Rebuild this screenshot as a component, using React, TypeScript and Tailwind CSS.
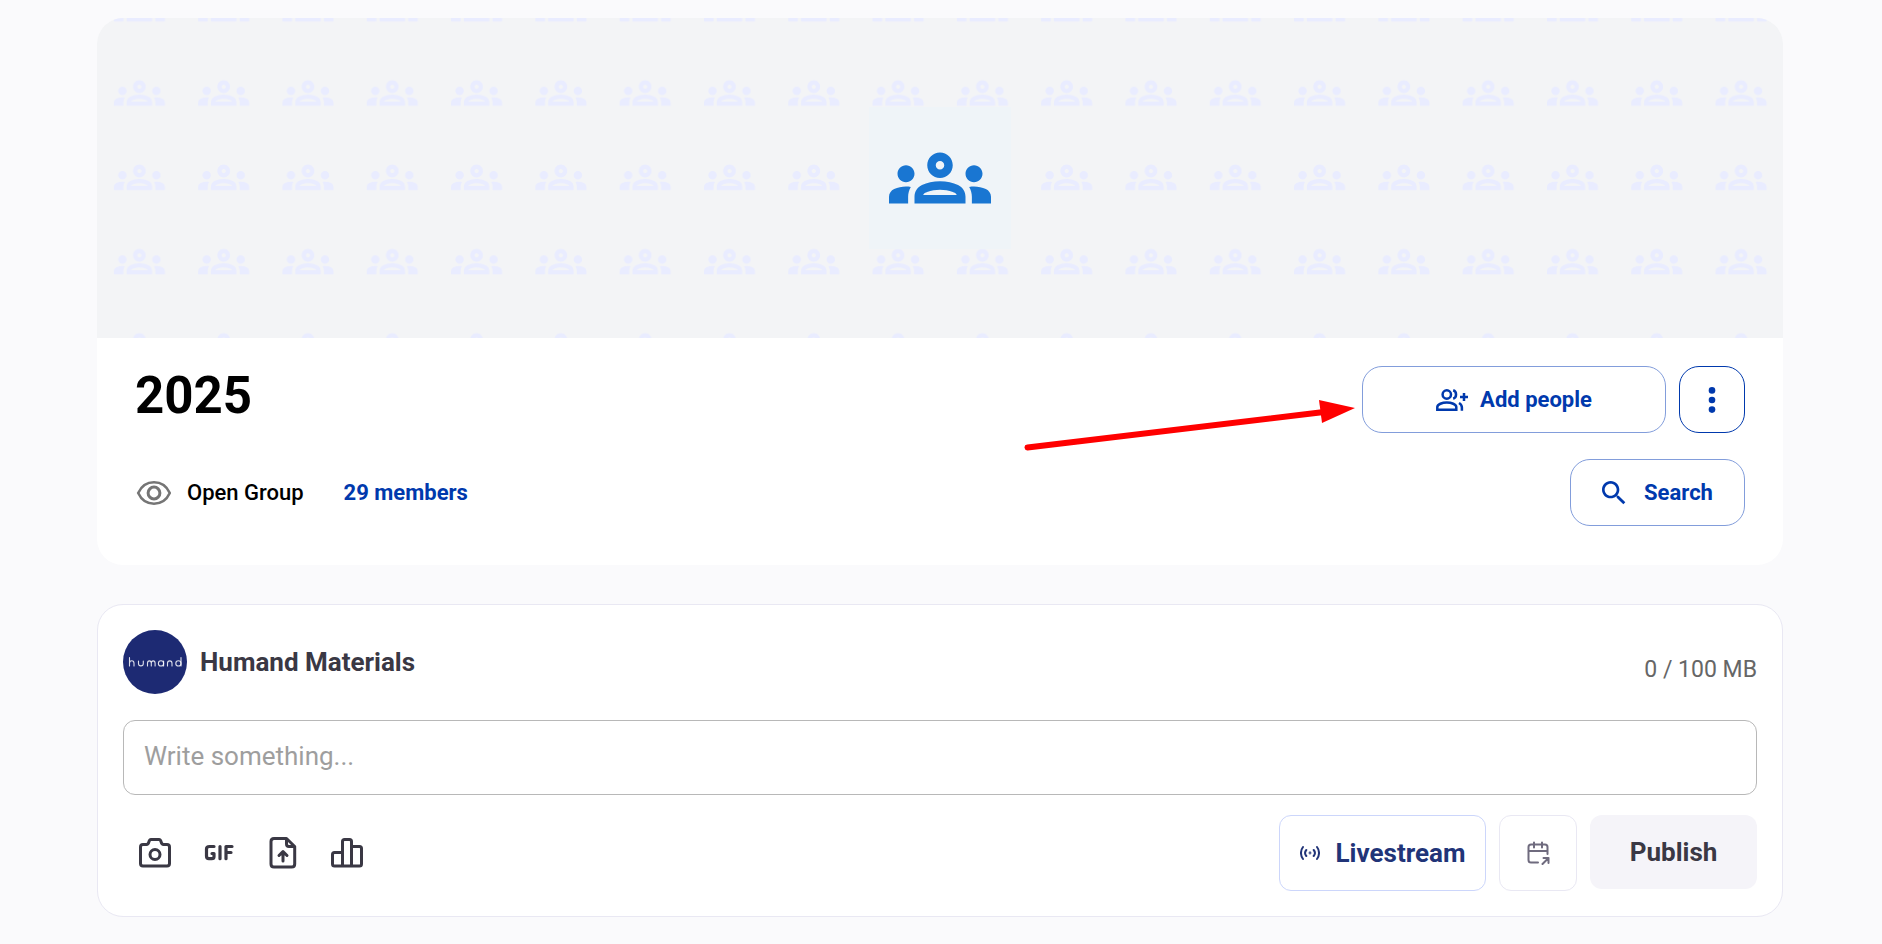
import { useState } from "react";

const GROUPS_PATH =
  "M4 13c1.1 0 2-.9 2-2s-.9-2-2-2-2 .9-2 2 .9 2 2 2zm1.13 1.1c-.37-.06-.74-.1-1.13-.1-.99 0-1.93.21-2.78.58C.48 14.9 0 15.62 0 16.43V18h4.5v-1.61c0-.83.23-1.61.63-2.29zM20 13c1.1 0 2-.9 2-2s-.9-2-2-2-2 .9-2 2 .9 2 2 2zm4 3.43c0-.81-.48-1.53-1.22-1.85-.85-.37-1.79-.58-2.78-.58-.39 0-.76.04-1.13.1.4.68.63 1.46.63 2.29V18H24v-1.57zm-7.76-2.78c-1.17-.52-2.61-.9-4.24-.9s-3.07.39-4.24.9C6.68 14.13 6 15.21 6 16.39V18h12v-1.61c0-1.18-.68-2.26-1.76-2.74zM8.07 16c.09-.23.13-.39.91-.69.97-.38 1.99-.56 3.02-.56s2.05.18 3.02.56c.77.3.81.46.91.69H8.07zM12 8c.55 0 1 .45 1 1s-.45 1-1 1-1-.45-1-1 .45-1 1-1m0-2c-1.66 0-3 1.34-3 3s1.34 3 3 3 3-1.34 3-3-1.34-3-3-3z";

function Cover() {
  return (
    <div className="relative flex h-80 items-center justify-center overflow-hidden rounded-t-[26px] bg-[#f3f4f6]">
      <svg className="absolute inset-0 h-full w-full" aria-hidden="true">
        <defs>
          <pattern id="groups" y="33" width="84.3" height="84.3" patternUnits="userSpaceOnUse">
            <path d={GROUPS_PATH} transform="translate(16.9 16.6) scale(2.125)" fill="#e9ecff" />
          </pattern>
        </defs>
        <rect width="100%" height="100%" fill="url(#groups)" />
      </svg>
      <div className="relative bg-[#eff4f8] p-5">
        <svg className="size-[102px]" viewBox="0 0 24 24" fill="#1976d2" aria-hidden="true">
          <path d={GROUPS_PATH} />
        </svg>
      </div>
    </div>
  );
}

function AddPeopleIcon() {
  return (
    <svg className="h-[22px] w-8" viewBox="0 0 32 22" fill="none" stroke="currentColor" strokeWidth="2.5" aria-hidden="true">
      <circle cx="10.8" cy="5.5" r="4.2" />
      <path d="M1.3 20.7v-2.6c0-2.8 5-4.6 9.500-4.600s9.500 1.800 9.500 4.600v2.600z" />
      <path d="M17.200 1.300c3.800 1.200 3.800 7.200 0 8.400M23 14c2.200 1.200 2.900 2.800 2.900 4.600v3.200M28 4v8M24 8h8" />
    </svg>
  );
}

function HeaderCard() {
  return (
    <section className="rounded-[26px] bg-white">
      <Cover />
      <div className="flex flex-col gap-[26px] px-[38px] pt-7 pb-[39px]">
        <div className="flex items-start justify-between">
          <h1 className="text-[51px] leading-[60px] font-bold text-black">2025</h1>
          <div className="flex gap-[13px]">
            <div className="relative">
              <button className="flex h-[67px] w-[304px] items-center justify-center gap-3 rounded-[20px] border border-[#829ddb] text-[22px] font-bold text-[#0039ad]">
                <AddPeopleIcon />
                Add people
              </button>
              {/* callout arrow */}
              <svg className="absolute top-[34px] right-full mr-1.5 h-[52px] w-[332px]" viewBox="0 0 332 52" aria-hidden="true">
                <path d="M3.500 47.500L300 12" stroke="#f00" strokeWidth="6" strokeLinecap="round" />
                <path d="M295 0L331 8L298 23z" fill="#f00" />
              </svg>
            </div>
            <button
              aria-label="More options"
              className="flex h-[67px] w-[66px] items-center justify-center rounded-[20px] border border-[#0039ad] text-[#0039ad]"
            >
              <svg className="h-[26px] w-2" viewBox="0 0 8 26" fill="currentColor" aria-hidden="true">
                <circle cx="4" cy="3.400" r="3.300" />
                <circle cx="4" cy="13" r="3.300" />
                <circle cx="4" cy="22.600" r="3.300" />
              </svg>
            </button>
          </div>
        </div>
        <div className="flex items-center justify-between">
          <div className="flex items-center text-[22px]">
            <svg className="mr-4 h-6 w-9" viewBox="-2 0 36 24" fill="none" stroke="#757575" strokeWidth="2.600" aria-hidden="true">
              <path d="M1.200 12C4.200 5.500 10 1.300 17 1.300S29.800 5.500 32.800 12C29.800 18.500 24 22.700 17 22.700S4.200 18.500 1.200 12z" />
              <circle cx="17" cy="12" r="5.900" strokeWidth="3" />
            </svg>
            <span className="font-medium text-black">Open Group</span>
            <a href="#members" className="ml-10 font-bold text-[#0039ad]">29 members</a>
          </div>
          <button className="flex h-[67px] w-[175px] items-center justify-center gap-[18px] rounded-[20px] border border-[#829ddb] text-[22px] font-bold text-[#0039ad]">
            <svg className="size-6" viewBox="3 3 18 18" fill="currentColor" aria-hidden="true">
              <path d="M15.500 14h-.79l-.28-.27C15.410 12.590 16 11.110 16 9.500 16 5.910 13.090 3 9.500 3S3 5.910 3 9.500 5.910 16 9.500 16c1.610 0 3.090-.59 4.230-1.570l.27.28v.79l5 4.990L20.490 19l-4.990-5zm-6 0C7.010 14 5 11.990 5 9.500S7.010 5 9.500 5 14 7.010 14 9.500 11.990 14 9.500 14z" />
            </svg>
            Search
          </button>
        </div>
      </div>
    </section>
  );
}

function Attachments() {
  return (
    <div className="flex gap-8 pl-4 text-[#3a3844]">
      <button aria-label="Add photo">
        <svg className="size-8" viewBox="0 0 32 32" fill="none" stroke="currentColor" strokeWidth="3" strokeLinejoin="round" aria-hidden="true">
          <path d="M4 7.500h3.500c1.500 0 2-1 2.300-2.300C10.200 3.400 10.800 2.500 12 2.500h8c1.200 0 1.800.9 2.200 2.700.3 1.300.8 2.300 2.300 2.300H28c1.500 0 2.500 1 2.500 2.500v16.500c0 1.500-1 2.500-2.500 2.500H4c-1.500 0-2.500-1-2.500-2.500V10c0-1.500 1-2.500 2.500-2.500z" />
          <circle cx="16" cy="17.500" r="5" />
        </svg>
      </button>
      <button aria-label="Add GIF">
        <svg className="size-8" viewBox="0 0 32 32" fill="none" stroke="currentColor" strokeWidth="3.200" strokeLinecap="round" strokeLinejoin="round" aria-hidden="true">
          <path d="M11 9.500H6.500C4.300 9.500 3.500 10.500 3.500 12v7c0 1.500.7 2.700 2.400 2.700h2.800c1.400 0 2.300-.7 2.300-2v-3.200H9M17 9.500v12.200M23 21.700V9.500h6M23 15.500h5" />
        </svg>
      </button>
      <button aria-label="Add file">
        <svg className="size-8" viewBox="0 0 32 32" fill="none" stroke="currentColor" strokeWidth="3" strokeLinecap="round" strokeLinejoin="round" aria-hidden="true">
          <path d="M7 1.500h12.500l8.200 8V27c0 2-1 3-3 3H7c-2 0-3-1-3-3V4.500c0-2 1-3 3-3zM19.500 2v5c0 1.600.9 2.500 2.500 2.500h5M16 24V14.500M12 18.500L16 14.500l4 4" />
        </svg>
      </button>
      <button aria-label="Add poll">
        <svg className="size-8" viewBox="0 0 32 32" fill="none" stroke="currentColor" strokeWidth="3" strokeLinejoin="round" aria-hidden="true">
          <path d="M11.500 29h-8c-1.300 0-2-.7-2-2V17.500c0-1.300.7-2 2-2h8M11.500 29V4.500c0-1.300.7-2 2-2h5c1.300 0 2 .7 2 2V29zM20.500 9.500h8c1.300 0 2 .7 2 2V27c0 1.300-.7 2-2 2h-8" />
        </svg>
      </button>
    </div>
  );
}

function Composer() {
  const [text, setText] = useState("");

  return (
    <section className="rounded-[26px] border border-[#e9e8f3] bg-white p-[25px]">
      <div className="flex items-center justify-between">
        <div className="flex items-center gap-[13px]">
          <div className="flex size-16 items-center justify-center rounded-full bg-[#1d2a73]">
            {/* thin rounded wordmark */}
            <svg
              className="h-3 w-[54px]"
              viewBox="0 0 54 12"
              fill="none"
              stroke="#fff"
              strokeOpacity=".85"
              strokeWidth="1.100"
              strokeLinecap="round"
              role="img"
              aria-label="humand"
            >
              <path d="M1.500 1.500v8.500M1.500 7.300c0-3.400 4.500-3.400 4.500 0V10M10.500 5v2.500c0 3.200 4.800 3.200 4.800 0V5M19.500 10V7.300c0-3.200 3.800-3.200 3.800 0V10M23.300 7.300c0-3.200 3.800-3.200 3.800 0V10M35.600 5v5M39.500 10V7.300c0-3.200 4.500-3.200 4.500 0V10M53 1.500V10" />
              <circle cx="33" cy="7.400" r="2.600" />
              <circle cx="50.400" cy="7.400" r="2.600" />
            </svg>
          </div>
          <h2 className="text-[26px] font-bold text-[#3a3844]">Humand Materials</h2>
        </div>
        <span className="pt-4 text-[23px] text-[#666]">0 / 100 MB</span>
      </div>
      <input
        value={text}
        onChange={(e) => setText(e.target.value)}
        aria-label="Write something"
        placeholder="Write something..."
        className="mt-[26px] h-[75px] w-full rounded-xl border border-[#b8b8b8] px-5 pb-1 text-[26px] text-[#3a3844] placeholder:text-[#9e9e9e] focus:outline-none"
      />
      <div className="mt-5 flex items-center justify-between">
        <Attachments />
        <div className="flex items-start gap-[13px] text-[26px] font-bold">
          <button className="flex h-[76px] w-[207px] items-center justify-center gap-4 rounded-xl border border-[#ccd6fb] text-[#213478]">
            <svg className="size-5" viewBox="0 0 20 20" fill="none" stroke="currentColor" strokeWidth="2" strokeLinecap="round" aria-hidden="true">
              <circle cx="10" cy="10" r=".4" />
              <path d="M6.300 7c-1.500 1.800-1.500 4.200 0 6M13.700 7c1.500 1.800 1.500 4.200 0 6M3 4c-2.700 3.500-2.700 8.500 0 12M17 4c2.700 3.500 2.700 8.500 0 12" />
            </svg>
            Livestream
          </button>
          <button
            aria-label="Schedule"
            className="flex h-[76px] w-[78px] items-center justify-center rounded-xl border border-[#e9e8f3] text-[#6f6b7e]"
          >
            <svg className="size-6" viewBox="0 0 24 24" fill="none" stroke="currentColor" strokeWidth="2" strokeLinecap="round" strokeLinejoin="round" aria-hidden="true">
              <path d="M12 21.500H5c-1.500 0-2.500-1-2.500-2.500V6c0-1.500 1-2.500 2.500-2.500h14c1.500 0 2.500 1 2.500 2.500v7M2.500 10h19M8 1.500v5M16 1.500v5M16.500 23l6-6M17.500 17h5v5" />
            </svg>
          </button>
          <button className="h-[74px] w-[167px] rounded-xl bg-[#f5f4f9] text-[#3a3844]">Publish</button>
        </div>
      </div>
    </section>
  );
}

export default function App() {
  return (
    <main className="flex min-h-screen flex-col gap-[39px] bg-[#fafafc] pt-[18px] pr-[99px] pb-[27px] pl-[97px] font-['Roboto',sans-serif]">
      <HeaderCard />
      <Composer />
    </main>
  );
}
